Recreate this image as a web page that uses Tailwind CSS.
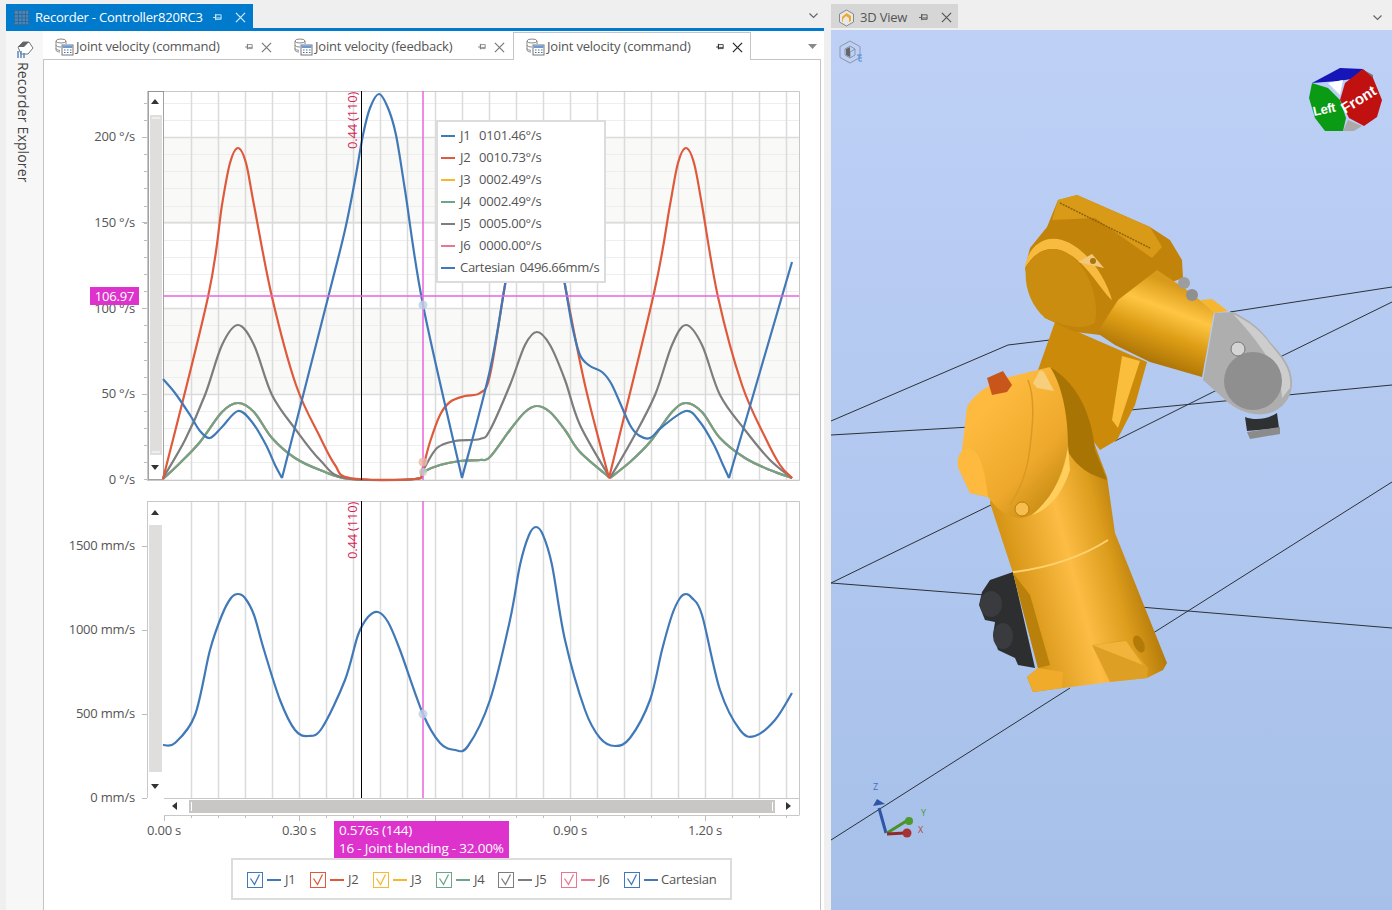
<!DOCTYPE html>
<html lang="en">
<head>
  <meta charset="UTF-8" />
  <title>Recorder - Controller820RC3</title>
  <script src="https://cdn.jsdelivr.net/npm/@tailwindcss/browser@4"></script>
</head>
<body class="w-[1392px] h-[910px] overflow-hidden flex bg-[#efefef] font-['Open_Sans',sans-serif] text-[13px] text-[#555] tracking-[-0.2px]">

  <svg class="hidden">
    <symbol id="dbgrid" viewBox="0 0 19 18">
      <ellipse cx="6" cy="3" rx="5" ry="2" fill="#fff" stroke="#888" />
      <path d="M1 3v9c0 1.2 2 2 4 2M11 3v3M1 7c0 1.2 2 2 5 2M1 10.500c0 1 2 1.800 4 1.900" fill="none" stroke="#888" />
      <rect x="7" y="7" width="11" height="10" fill="#fff" stroke="#777" />
      <rect x="7.500" y="7.500" width="10" height="2.500" fill="#6d9bd1" />
      <path d="M9 12h1.500M12 12h1.500M15 12h1.500M9 14.500h1.500M12 14.500h1.500M15 14.500h1.500" stroke="#3f6ea8" />
    </symbol>
    <symbol id="pin" viewBox="0 0 12 10">
      <path d="M1 5h3M4 2h6v5H4zM4 1v7M5 5.500h5" fill="none" stroke="currentColor" />
    </symbol>
    <symbol id="cross" viewBox="0 0 12 12">
      <path d="M1 1l10 10M11 1L1 11" fill="none" stroke="currentColor" stroke-width="1.300" />
    </symbol>
    <symbol id="tick" viewBox="0 0 16 16">
      <path d="M3.500 6.500l4 6 5-10" fill="none" stroke="currentColor" stroke-width="1.300" />
      <rect x="0.500" y="0.500" width="15" height="15" fill="none" stroke="currentColor" />
    </symbol>
  </svg>

  <!-- Recorder panel -->
  <div class="w-[824px] shrink-0 pl-[6px] pt-[4px] flex flex-col">
    <div class="h-[24px] flex items-center">
      <div class="w-[247px] h-full bg-[#007acc] text-white flex items-center pl-[8px] pt-[3px]">
        <svg class="w-[15px] h-[15px] mr-[6px]" viewBox="0 0 15 15">
          <rect x="0.500" y="0.500" width="14" height="14" fill="#4b86b8" stroke="#3c6d98" />
          <path d="M0 4.500h15M0 8h15M0 11.500h15M4.500 0v15M8 0v15M11.500 0v15" stroke="#2e6a9c" />
        </svg>
        <span class="w-[177px] whitespace-nowrap">Recorder - Controller820RC3</span>
        <svg class="w-[11px] h-[9px] text-[#d7ecf9]"><use href="#pin" /></svg>
        <svg class="w-[11px] h-[11px] ml-[12px] text-[#d7ecf9]"><use href="#cross" /></svg>
      </div>
      <svg class="w-[9px] h-[6px] ml-auto mr-[6px] text-[#666]" viewBox="0 0 9 6"><path d="M0.500 0.500l4 4 4-4" fill="none" stroke="currentColor" stroke-width="1.200" /></svg>
    </div>
    <div class="h-[3px] bg-[#007acc]"></div>

    <div class="flex-1 flex bg-white pr-[3px] min-h-0">
      <!-- side strip -->
      <div class="w-[37px] shrink-0 flex flex-col items-center pt-[10px] bg-[#f7f7f7]">
        <svg class="w-[18px] h-[19px]" viewBox="0 0 18 19">
          <path d="M2 6l5-5h6l4 6-5 6-7 0z" fill="#fff" stroke="#777" />
          <path d="M2 6l5-5h6l-5 5z" fill="#666" />
          <path d="M2 10v7M5 10v7M8 12v5" stroke="#5c88be" stroke-width="1.500" />
        </svg>
        <span class="[writing-mode:vertical-rl] mt-[2px] text-[14px] text-[#444] tracking-[0.15px] -ml-[2px]">Recorder Explorer</span>
      </div>

      <!-- document area -->
      <div class="flex-1 flex flex-col min-w-0">
        <div class="h-[29px] shrink-0 flex items-end border-b border-[#c4c4c4] relative">
          <div class="w-[240px] h-full flex items-center pl-[12px] pt-[4px] shrink-0">
            <svg class="w-[19px] h-[18px] mr-[2px]"><use href="#dbgrid" /></svg>
            <span class="w-[168px] whitespace-nowrap">Joint velocity (command)</span>
            <svg class="w-[10px] h-[8px] text-[#777]"><use href="#pin" /></svg>
            <svg class="w-[11px] h-[11px] ml-[7px] text-[#777]"><use href="#cross" /></svg>
          </div>
          <div class="w-[230px] h-full flex items-center pl-[11px] pt-[4px] shrink-0">
            <svg class="w-[19px] h-[18px] mr-[2px]"><use href="#dbgrid" /></svg>
            <span class="w-[162px] whitespace-nowrap">Joint velocity (feedback)</span>
            <svg class="w-[10px] h-[8px] text-[#777]"><use href="#pin" /></svg>
            <svg class="w-[11px] h-[11px] ml-[7px] text-[#777]"><use href="#cross" /></svg>
          </div>
          <div class="w-[238px] h-[28px] -mb-px flex items-center pl-[12px] pt-[1px] shrink-0 bg-white border border-b-0 border-[#c4c4c4]">
            <svg class="w-[19px] h-[18px] mr-[2px]"><use href="#dbgrid" /></svg>
            <span class="w-[168px] whitespace-nowrap">Joint velocity (command)</span>
            <svg class="w-[10px] h-[8px] text-[#222]"><use href="#pin" /></svg>
            <svg class="w-[11px] h-[11px] ml-[7px] text-[#222]"><use href="#cross" /></svg>
          </div>
          <svg class="absolute right-[4px] top-[13px] w-[9px] h-[5px]" viewBox="0 0 9 5"><path d="M0 0h9L4.500 5z" fill="#888" /></svg>
        </div>

        <div class="flex-1 relative border-l border-r border-[#c4c4c4]">
          <svg id="chart" class="block w-[776px] h-[798px]" viewBox="44 60 776 798">
            <!-- top plot bands and grid -->
            <rect x="164" y="137" width="635" height="85" class="fill-[#f9f9f7]" />
            <rect x="164" y="308" width="635" height="86" class="fill-[#f9f9f7]" />
            <path id="minorH" class="fill-none stroke-[#eeeeee]" />
            <path id="majorH" class="fill-none stroke-[#dcdcdc]" stroke-width="1.500" />
            <path id="gridV" class="fill-none stroke-[#dbdbdb]" stroke-width="1.500" />
            <path id="ticks" class="fill-none stroke-[#bdbdbd]" />
            <path d="M147 91.500H799.500V480.500H147M147 501.500H799.500V815M164 815.500H799.500M147.500 91V480M147.500 501V798M164 798.500H799" class="fill-none stroke-[#c8c8c8]" />

            <!-- left scrollbars -->
            <rect x="148.500" y="91.500" width="15" height="388" class="fill-white stroke-[#444]" stroke-dasharray="1 1" />
            <rect x="150" y="115" width="12" height="340" class="fill-[#dfdedc]" />
            <path d="M152 118h8M152 452h8" class="stroke-white" />
            <path d="M151 104l4-5 4 5zM151 465l4 5 4-5z" class="fill-[#333]" />
            <rect x="149" y="525" width="13" height="247" class="fill-[#dfdedc]" />
            <path d="M151 515l4-5 4 5zM151 784l4 5 4-5z" class="fill-[#333]" />

            <!-- bottom scrollbar -->
            <rect x="165" y="799" width="634" height="16" class="fill-white" />
            <rect x="189" y="800" width="586" height="13" class="fill-[#c8c7c5]" />
            <path d="M191.500 802v9M772.500 802v9" class="stroke-white" />
            <path d="M177 802l-5 4 5 4zM786 802l5 4-5 4z" class="fill-[#333]" />

            <!-- curves -->
            <g class="fill-none" stroke-width="2.200" stroke-linejoin="round">
              <path data-c="j3" class="stroke-[#f5b82e]" />
              <path data-c="j6" class="stroke-[#e9778f]" />
              <path data-c="j4" class="stroke-[#6ba58a]" />
              <path data-c="j5" class="stroke-[#7d7d7d]" />
              <path data-c="j2" class="stroke-[#df5a3c]" />
              <path data-c="j1" class="stroke-[#4179b8]" />
              <path data-c="cart" class="stroke-[#4179b8]" />
            </g>

            <!-- cursors -->
            <path d="M361.500 91V480M361.500 501V798" class="stroke-black" />
            <path d="M423 91V480M423 501V798M163 296H799" class="stroke-[#e866df]" stroke-width="1.500" />
            <circle cx="423" cy="305" r="4.500" class="fill-[#b9cfe3]" opacity="0.8" />
            <circle cx="423" cy="462" r="4.500" class="fill-[#e9b8a9]" opacity="0.8" />
            <circle cx="423" cy="472" r="4" class="fill-[#cccccc]" opacity="0.8" />
            <circle cx="423" cy="714" r="4.500" class="fill-[#b9cfe3]" opacity="0.8" />
            <text transform="translate(357 149) rotate(-90)" class="fill-[#d21f55] text-[13px]">0.44 (110)</text>
            <text transform="translate(357 559) rotate(-90)" class="fill-[#d21f55] text-[13px]">0.44 (110)</text>

            <!-- axis labels -->
            <g class="fill-[#555] text-[13px]" text-anchor="end">
              <text x="135" y="141">200 °/s</text>
              <text x="135" y="227">150 °/s</text>
              <text x="135" y="313">100 °/s</text>
              <text x="135" y="398">50 °/s</text>
              <text x="135" y="484">0 °/s</text>
              <text x="135" y="550">1500 mm/s</text>
              <text x="135" y="634">1000 mm/s</text>
              <text x="135" y="718">500 mm/s</text>
              <text x="135" y="802">0 mm/s</text>
            </g>
            <g class="fill-[#555] text-[13px]" text-anchor="middle">
              <text x="164" y="835">0.00 s</text>
              <text x="299" y="835">0.30 s</text>
              <text x="570" y="835">0.90 s</text>
              <text x="705" y="835">1.20 s</text>
            </g>
          </svg>

          <!-- value tags and hover legend, over the plot -->
          <div class="absolute left-[46px] top-[227px] w-[49px] h-[18px] bg-[#dd33cc] text-white text-center leading-[19px]">106.97</div>
          <div class="absolute left-[290px] top-[761px] w-[175px] h-[37px] bg-[#dd33cc] text-white text-[13.500px] pl-[5px] leading-[18px]">
            <div>0.576s (144)</div>
            <div class="whitespace-nowrap">16 - Joint blending - 32.00%</div>
          </div>
          <div class="absolute left-[392px] top-[60px] w-[170px] h-[163px] bg-white border-2 border-[#dcdcdc] pt-[3px] pl-[3px]">
            <div class="h-[22px] flex items-center"><i class="w-[14px] h-[2px] bg-[#4179b8] mr-[5px]"></i><span class="w-[19px]">J1</span><span>0101.46°/s</span></div>
            <div class="h-[22px] flex items-center"><i class="w-[14px] h-[2px] bg-[#df5a3c] mr-[5px]"></i><span class="w-[19px]">J2</span><span>0010.73°/s</span></div>
            <div class="h-[22px] flex items-center"><i class="w-[14px] h-[2px] bg-[#f5b82e] mr-[5px]"></i><span class="w-[19px]">J3</span><span>0002.49°/s</span></div>
            <div class="h-[22px] flex items-center"><i class="w-[14px] h-[2px] bg-[#6ba58a] mr-[5px]"></i><span class="w-[19px]">J4</span><span>0002.49°/s</span></div>
            <div class="h-[22px] flex items-center"><i class="w-[14px] h-[2px] bg-[#7d7d7d] mr-[5px]"></i><span class="w-[19px]">J5</span><span>0005.00°/s</span></div>
            <div class="h-[22px] flex items-center"><i class="w-[14px] h-[2px] bg-[#e9778f] mr-[5px]"></i><span class="w-[19px]">J6</span><span>0000.00°/s</span></div>
            <div class="h-[22px] flex items-center whitespace-nowrap tracking-[-0.3px]"><i class="w-[14px] h-[2px] bg-[#4179b8] mr-[5px]"></i><span class="mr-[5px]">Cartesian</span><span>0496.66mm/s</span></div>
          </div>

          <!-- series toggles -->
          <div class="ml-[187px] w-[501px] h-[42px] border-2 border-[#dcdcdc] bg-white flex items-center pl-[14px] pt-[2px]">
            <div class="w-[63px] flex items-center"><svg class="w-[16px] h-[16px] text-[#4179b8] mr-[4px]"><use href="#tick" /></svg><i class="w-[14px] h-[2px] bg-[#4179b8] mr-[4px]"></i>J1</div>
            <div class="w-[63px] flex items-center"><svg class="w-[16px] h-[16px] text-[#df5a3c] mr-[4px]"><use href="#tick" /></svg><i class="w-[14px] h-[2px] bg-[#df5a3c] mr-[4px]"></i>J2</div>
            <div class="w-[63px] flex items-center"><svg class="w-[16px] h-[16px] text-[#f5b82e] mr-[4px]"><use href="#tick" /></svg><i class="w-[14px] h-[2px] bg-[#f5b82e] mr-[4px]"></i>J3</div>
            <div class="w-[62px] flex items-center"><svg class="w-[16px] h-[16px] text-[#6ba58a] mr-[4px]"><use href="#tick" /></svg><i class="w-[14px] h-[2px] bg-[#6ba58a] mr-[4px]"></i>J4</div>
            <div class="w-[63px] flex items-center"><svg class="w-[16px] h-[16px] text-[#7d7d7d] mr-[4px]"><use href="#tick" /></svg><i class="w-[14px] h-[2px] bg-[#7d7d7d] mr-[4px]"></i>J5</div>
            <div class="w-[63px] flex items-center"><svg class="w-[16px] h-[16px] text-[#e9778f] mr-[4px]"><use href="#tick" /></svg><i class="w-[14px] h-[2px] bg-[#e9778f] mr-[4px]"></i>J6</div>
            <div class="flex items-center"><svg class="w-[16px] h-[16px] text-[#4179b8] mr-[4px]"><use href="#tick" /></svg><i class="w-[14px] h-[2px] bg-[#4179b8] mr-[3px]"></i>Cartesian</div>
          </div>
        </div>
      </div>
    </div>
  </div>

  <!-- 3D view panel -->
  <div class="w-[561px] ml-[7px] shrink-0 pt-[4px] flex flex-col">
    <div class="h-[26px] flex items-start">
      <div class="w-[127px] h-[24px] bg-[#d6d6d6] flex items-center pl-[7px] pt-[3px]">
        <svg class="w-[17px] h-[18px] mr-[5px]" viewBox="0 0 17 18">
          <path d="M8.500 1l7 4v8l-7 4-7-4V5z" fill="#e8e8e8" stroke="#888" />
          <path d="M8.500 4l4.500 3v5l-2 1V9L8 7l-3 3v3l-1-1V8z" fill="#eda92a" />
        </svg>
        <span class="w-[58px] whitespace-nowrap">3D View</span>
        <svg class="w-[11px] h-[9px] text-[#555]"><use href="#pin" /></svg>
        <svg class="w-[11px] h-[11px] ml-[12px] text-[#555]"><use href="#cross" /></svg>
      </div>
      <svg class="w-[9px] h-[6px] ml-auto mr-[10px] mt-[11px] text-[#666]" viewBox="0 0 9 6"><path d="M0.500 0.500l4 4 4-4" fill="none" stroke="currentColor" stroke-width="1.200" /></svg>
    </div>
    <div class="flex-1 bg-linear-to-b from-[#bed0f6] to-[#a6c0e9] min-h-0">
      <svg class="block w-[561px] h-[880px]" viewBox="831 30 561 880">
        <defs>
          <linearGradient id="bodyG" gradientUnits="userSpaceOnUse" x1="1000" y1="600" x2="1150" y2="560">
            <stop offset="0" stop-color="#c98806" />
            <stop offset="0.5" stop-color="#fdbd45" />
            <stop offset="0.75" stop-color="#dc9c1c" />
            <stop offset="1" stop-color="#a66f04" />
          </linearGradient>
          <linearGradient id="armG" gradientUnits="userSpaceOnUse" x1="1175" y1="285" x2="1145" y2="365">
            <stop offset="0" stop-color="#d99a1a" />
            <stop offset="0.3" stop-color="#ffc643" />
            <stop offset="0.6" stop-color="#dc9c14" />
            <stop offset="1" stop-color="#a56e04" />
          </linearGradient>
          <linearGradient id="domeG" gradientUnits="userSpaceOnUse" x1="975" y1="420" x2="1060" y2="500">
            <stop offset="0" stop-color="#fdba3e" />
            <stop offset="0.6" stop-color="#eea92c" />
            <stop offset="1" stop-color="#c58a12" />
          </linearGradient>
        </defs>

        <!-- floor grid -->
        <g class="fill-none stroke-[#2b3138]">
          <path d="M831 421L1008 345L1050 340" />
          <path d="M831 435L970 427" />
          <path d="M1230 312L1392 287" />
          <path d="M1130 410L1392 385" />
          <path d="M1115 441L1217 390M1280 357L1392 302" />
          <path d="M831 583L985 595M1140 607L1392 628" />
          <path d="M831 583L995 503" />
          <path d="M1150 635L1392 482" />
          <path d="M831 840L1070 688" />
        </g>

        <!-- 3D view toolbar icon -->
        <g class="fill-none stroke-[#8a96a8]">
          <path d="M850 41l10 5.500v11L850 63l-10-5.500v-11z" />
          <path d="M850 46l5 3v6l-5 3-5-3v-6z" />
          <path d="M845 49l5 3 5-3M850 52v6" />
        </g>
        <path d="M850 47l-4 2v6l4 2z" fill="#666" />
        <path d="M857 55h5M859 55v6h3M859 58h3" class="fill-none stroke-[#4a8fd8]" />

        <!-- orientation cube -->
        <path d="M1362 69l11 6v10z" fill="#777" />
        <path d="M1343 131l5-11 14 6-8 5z" fill="#aaa" />
        <path d="M1312 83l28-15 23 1-11 10-14 2z" fill="#1515b8" />
        <path d="M1328 83l15-3-3 15z" fill="#fff" />
        <path d="M1340 100l5-17 18-14 10 9 9 22-5 17-13 9-15-8z" fill="#c01010" />
        <path d="M1312 83l16 5 12 12 6 18-3 13-18 0-10-13-6-20z" fill="#0a9a14" />
        <text transform="translate(1314 116) rotate(-12)" fill="#fff" class="font-['Liberation_Sans'] text-[13px] font-bold tracking-tight">Left</text>
        <text transform="translate(1345 114) rotate(-32)" fill="#fff" class="font-['Liberation_Sans'] text-[15px] font-bold tracking-normal">Front</text>

        <!-- black connectors -->
        <path d="M1013 572L990 580L982 592L979 605L985 620L995 622L993 635L998 650L1015 658L1018 665L1035 668Z" fill="#2d2e30" />
        <ellipse cx="991" cy="604" rx="11" ry="13" fill="#3a3b3e" />
        <ellipse cx="1003" cy="636" rx="10" ry="13" fill="#3a3b3e" />

        <!-- link arm -->
        <path d="M1055 322L1038 370L1100 450L1117 440L1135 405L1147 362Z" fill="#cb8a0a" />
        <path d="M1122 356L1140 361L1118 428L1112 420Z" fill="#fbbd3c" />

        <!-- lower body -->
        <path d="M1093 440L1107 477L1115 533L1143 603L1167 663L1163 670L1147 678L1110 682L1063 688L1033 692L1027 677L1038 668L1013 573L990 503L1000 440L1050 367C1075 385 1088 410 1093 440Z" fill="url(#bodyG)" />

        <!-- turret dome and its crescent -->
        <path d="M1050 367C1080 385 1092 418 1095 450L1107 480C1090 475 1078 468 1068 452L1040 372Z" fill="#a87505" />
        <path d="M967 407C975 392 995 380 1017 375L1050 367C1062 385 1068 415 1068 445C1062 485 1042 515 1022 518C1005 518 997 508 988 497L970 493L958 467L962 450Z" fill="url(#domeG)" />
        <path d="M1068 445C1065 475 1052 498 1032 515C1048 510 1062 495 1070 470Z" fill="#ffce5c" />
        <path d="M1028 380C1036 400 1032 430 1030 447C1028 470 1020 490 1010 505" class="fill-none stroke-[#d99a24]" stroke-width="1.500" />
        <path d="M958 467C956 455 962 448 970 448C980 452 985 470 988 497L970 493Z" fill="#fdba3e" />
        <path d="M1013 572C1050 568 1085 555 1108 540" class="fill-none stroke-[#ffd070]" stroke-width="2" />
        <path d="M1013 573L1030 595L1050 665L1038 668Z" fill="#b9800b" />
        <path d="M1092 645L1126 640L1148 668L1147 678L1110 682Z" fill="#dda024" />
        <path d="M1092 645L1126 641L1143 665Z" fill="#f2b43a" />
        <ellipse cx="1139" cy="644" rx="5" ry="9" transform="rotate(-25 1139 644)" fill="#b37a08" />
        <circle cx="1022" cy="509" r="7" fill="#f7bd4d" stroke="#b87e0a" />
        <path d="M1027 677L1038 668L1063 672L1062 688L1033 692Z" fill="#f0ab2a" />
        <path d="M1040 370L1033 383L1037 388L1054 391L1044 372Z" fill="#f7ce7c" />
        <path d="M987 378L1003 371L1012 385L1007 392L992 395Z" fill="#c8561b" />

        <!-- head -->
        <path d="M1058 200L1077 195L1150 227L1170 240L1182 260L1183 278L1150 290L1100 335L1075 332L1045 318L1030 295L1025 268L1030 248L1047 227Z" fill="#c2830a" />
        <path d="M1058 200L1077 195L1150 227L1162 247L1152 258L1095 218L1052 220Z" fill="#d99a18" />
        <path d="M1060 203L1150 248" class="fill-none stroke-[#8f6208]" stroke-width="1.500" stroke-dasharray="2 1" />
        <path d="M1025 268C1028 245 1045 235 1062 240C1085 247 1105 275 1112 300C1100 290 1085 258 1060 250C1045 246 1032 255 1025 268Z" fill="#f7bb40" />
        <path d="M1026 268C1032 255 1045 246 1060 250C1085 258 1100 295 1095 322C1085 332 1060 325 1045 318C1030 305 1024 285 1026 268Z" fill="#cb8d10" />
        <path d="M1078 262L1092 254L1104 268Z" fill="#f2c87e" />
        <circle cx="1093" cy="261" r="3" fill="#a97408" />

        <!-- forearm -->
        <path d="M1157 270L1190 292L1214 312L1202 377L1150 362L1115 345L1097 333L1118 300Z" fill="url(#armG)" />
        <path d="M1200 300L1212 299L1228 311L1214 313Z" fill="#f7b62f" />
        <circle cx="1184" cy="283" r="6" fill="#9d9d9d" />
        <circle cx="1192" cy="295" r="6" fill="#8f8f8f" />

        <!-- wrist -->
        <path d="M1215 313L1233 312C1250 320 1262 330 1270 342C1285 358 1293 370 1292 385C1291 400 1280 412 1265 414C1250 416 1235 410 1222 397L1203 380Z" fill="#aeaeae" />
        <path d="M1233 314C1250 322 1262 332 1270 344C1284 360 1292 372 1290 388L1282 398C1282 375 1262 345 1233 314Z" fill="#cdcdcd" />
        <circle cx="1253" cy="381" r="29" fill="#8f8f8f" />
        <circle cx="1238" cy="349" r="7" fill="#d4d4d4" stroke="#777" />
        <path d="M1245 417C1255 421 1268 419 1277 413L1279 428L1247 431Z" fill="#2f3032" />
        <path d="M1247 432L1280 427L1280 434L1250 439Z" fill="#8b8b8b" />

        <!-- axis triad -->
        <path d="M886 833L879 808" class="stroke-[#2f55a8]" stroke-width="3" />
        <path d="M873 806L877 799L885 804Z" fill="#2f55a8" />
        <path d="M887 833L908 820" class="stroke-[#4d8f28]" stroke-width="3" />
        <circle cx="909" cy="821" r="4" fill="#4f9a2c" />
        <path d="M887 834L905 833" class="stroke-[#8e2a2a]" stroke-width="3" />
        <circle cx="907" cy="833" r="4.500" fill="#a83232" />
        <g class="text-[9px]">
          <text x="873" y="790" fill="#3f6ec0">Z</text>
          <text x="921" y="816" fill="#4f9a2c">Y</text>
          <text x="918" y="833" fill="#b04545">X</text>
        </g>
      </svg>
    </div>
  </div>

  <script>
    // plot grid, ticks
    let v = '', major = '', minor = '', t = '';
    for (let k = 0; k <= 23; k++) {
      const x = Math.round(164 + 27.05 * k) + 0.5;
      if (k > 0) v += `M${x} 92V480M${x} 502V798`;
      t += `M${x} 815V${k % 5 === 0 ? 821 : 818}`;
    }
    for (const y of [137, 222, 308, 394]) {
      major += `M164 ${y + 0.5}H799`;
      t += `M142 ${y + 0.5}H147`;
    }
    for (let y = 103; y < 480; y += 17.1) {
      minor += `M164 ${Math.round(y) + 0.5}H799`;
      t += `M144 ${Math.round(y) + 0.5}H147`;
    }
    for (const y of [546, 630, 714, 798]) t += `M142 ${y + 0.5}H147`;
    document.getElementById('gridV').setAttribute('d', v);
    document.getElementById('majorH').setAttribute('d', major);
    document.getElementById('minorH').setAttribute('d', minor);
    document.getElementById('ticks').setAttribute('d', t);

    // catmull-rom through the traced points; each inner array is one smooth run
    function smooth(runs) {
      return runs.map(p => {
        let d = `M${p[0][0]} ${p[0][1]}`;
        for (let i = 0; i < p.length - 1; i++) {
          const a = p[i - 1] || p[i], b = p[i], c = p[i + 1], e = p[i + 2] || c;
          d += `C${b[0] + (c[0] - a[0]) / 6} ${b[1] + (c[1] - a[1]) / 6} ${c[0] - (e[0] - b[0]) / 6} ${c[1] - (e[1] - b[1]) / 6} ${c[0]} ${c[1]}`;
        }
        return d;
      }).join('');
    }

    const green = [[[163,479],[180,463],[200,442],[222,412],[238,403],[254,412],[272,438],[295,458],[320,470],[350,479],[415,479],[423,472],[440,465],[460,461],[480,460],[490,457],[510,430],[525,412],[537,406],[550,412],[565,430],[580,452],[610,478]],
      [[610,478],[630,462],[650,442],[672,412],[686,403],[702,412],[720,438],[745,458],[770,470],[792,478]]];
    const curves = {
      j1: [[[163,379],[175,393],[190,415],[200,431],[210,438],[222,427],[238,411],[252,422],[266,445],[275,465],[282,478]],
        [[282,478],[330,290],[345,230],[355,180],[363,135],[370,108],[379,94],[388,108],[396,135],[405,190],[423,305],[462,478]],
        [[462,478],[490,370],[505,285],[520,200],[535,150],[550,200],[565,285],[572,325],[580,355],[590,366],[602,372],[612,385],[630,425],[640,436],[650,438],[662,427],[686,411],[700,422],[714,445],[723,465],[729,478]],
        [[729,478],[792,262]]],
      j2: [[[163,479],[208,297],[222,205],[230,163],[238,148],[246,163],[254,205],[272,297],[296,385],[320,437],[335,465],[350,478],[415,479],[422,470],[430,442],[440,415],[450,402],[465,396],[480,393],[490,375],[505,285],[520,200],[535,150],[550,200],[565,285],[585,385],[609,478]],
        [[609,478],[654,293],[670,205],[678,163],[686,148],[694,163],[702,205],[718,297],[742,385],[765,437],[780,465],[792,478]]],
      j3: green, j4: green, j6: green,
      j5: [[[163,478],[185,440],[205,395],[222,345],[238,325],[254,345],[272,395],[296,430],[320,460],[345,478],[415,479],[423,470],[437,448],[455,441],[480,439],[490,430],[510,385],[525,345],[537,332],[550,345],[565,380],[580,425],[610,478]],
        [[610,478],[632,440],[655,395],[672,345],[686,325],[702,345],[720,395],[745,430],[770,460],[792,478]]],
      cart: [[[163,745],[175,743],[195,715],[210,650],[222,615],[231,598],[238,594],[245,598],[254,615],[264,650],[280,700],[295,730],[308,736],[322,728],[345,680],[358,635],[368,617],[378,612],[388,622],[400,650],[423,714],[440,743],[455,750],[468,746],[490,700],[510,620],[520,565],[529,535],[536,527],[543,535],[552,565],[565,640],[585,710],[600,738],[615,746],[630,738],[650,700],[662,650],[672,615],[680,598],[686,594],[692,598],[702,615],[720,690],[740,730],[755,736],[775,720],[792,693]]]
    };
    document.querySelectorAll('[data-c]').forEach(el => el.setAttribute('d', smooth(curves[el.dataset.c])));
  </script>
</body>
</html>
